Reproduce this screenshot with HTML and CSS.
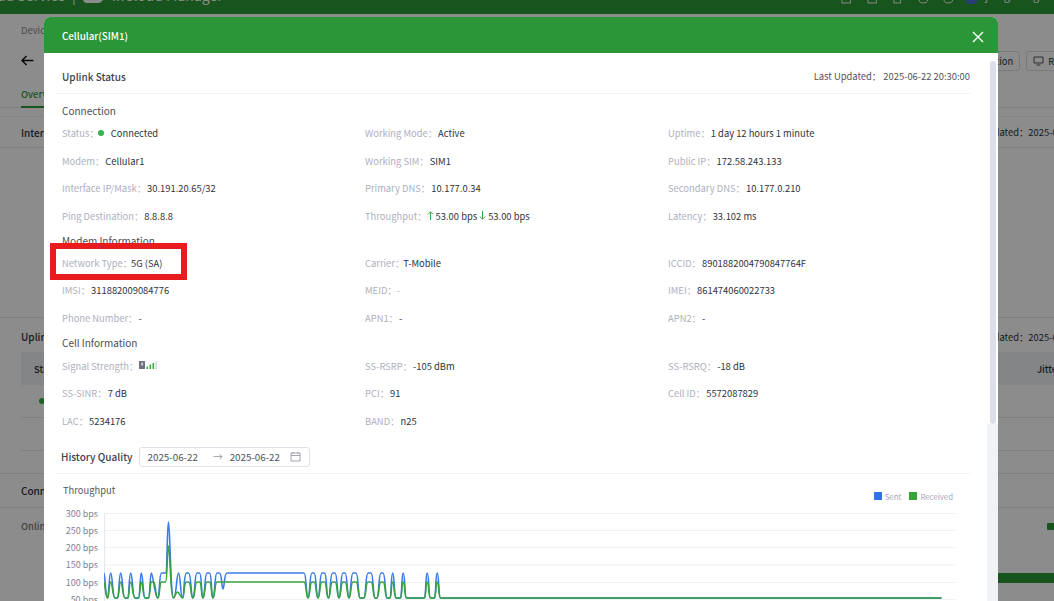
FILE: index.html
```html
<!DOCTYPE html>
<html lang="en">
<head>
<meta charset="utf-8">
<title>Cellular(SIM1)</title>
<link rel="stylesheet" href="styles.css">
</head>
<body>
<div class="page">
  <header class="topbar">
    <div class="brand">
      <span>ud Service</span><span class="sep">|</span>
      <svg class="logo" width="24" height="8" viewBox="0 0 24 8"><path d="M2 0h20c1 0 2 1 1 3l-4 3c-1 1-2 2-4 2H4C1 8 0 6 0 3z" fill="#fff"/></svg>
      <span>InCloud Manager</span>
    </div>
    <div class="tools">
      <svg width="11" height="4" viewBox="0 0 11 4"><path d="M1 0v3h9V0" fill="none" stroke="#fff"/></svg>
      <svg width="11" height="4" viewBox="0 0 11 4"><path d="M1 0v3h9V0" fill="none" stroke="#fff"/></svg>
      <svg width="11" height="4" viewBox="0 0 11 4"><path d="M2 0v3h7V0" fill="none" stroke="#fff"/></svg>
      <svg width="11" height="4" viewBox="0 0 11 4"><path d="M1 0c0 2 2 3 4.500 3s4.500-1 4.500-3" fill="none" stroke="#fff"/></svg>
      <svg width="11" height="4" viewBox="0 0 11 4"><path d="M1 0c0 2 2 3 4.500 3s4.500-1 4.500-3" fill="none" stroke="#fff"/></svg>
      <i class="avatar"></i>
      <span class="user">jiangmengzhi</span>
    </div>
  </header>
  <div class="crumb">Device</div>
  <div class="titlebar">
    <svg class="back" width="13" height="11" viewBox="0 0 13 11"><path d="M12.500 5.500H1.500M5.500 1L1 5.500 5.500 10" fill="none" stroke="#111" stroke-width="1.500"/></svg>
    <div class="actions">
      <span class="btn">Connection</span>
      <span class="btn"><svg width="11" height="10" viewBox="0 0 11 10"><path d="M1 1h9v6H1zM3.500 9h4" fill="none" stroke="#555" stroke-width="1"/></svg><span>Remote</span></span>
    </div>
  </div>
  <div class="tabs"><span class="tab">Overview</span></div>
  <section class="bg-card bg-inter"><b>Interface</b><span>Last Updated：2025-06-22 20:30:00</span></section>
  <section class="bg-card bg-uplink"><b>Uplink</b><span>Last Updated：2025-06-22 20:30:00</span></section>
  <div class="bg-head"><b>Status</b><b>Jitter</b></div>
  <div class="bg-row"><i class="bg-dot"></i></div>
  <div class="bg-row"></div>
  <section class="bg-card bg-conn"><b>Conn</b></section>
  <div class="bg-online"><span>Online</span><i class="online-bar"></i></div>
  <div class="bg-progress"></div>
</div>
<div class="dim-layer"></div>

<div class="modal">
  <div class="modal-head">
    <span>Cellular(SIM1)</span>
    <svg class="close" width="12" height="12" viewBox="0 0 12 12"><path d="M1 1l10 10M11 1L1 11" stroke="#fff" stroke-width="1.400" fill="none"/></svg>
  </div>
  <div class="modal-main">
    <div class="modal-body">
      <div class="uplink-head"><b>Uplink Status</b><span>Last Updated：&nbsp;2025-06-22 20:30:00</span></div>

      <h4 class="sec sec-conn">Connection</h4>
      <div class="grid">
        <div class="kv"><span class="k">Status：</span><i class="dot"></i><span class="v">Connected</span></div>
        <div class="kv"><span class="k">Working Mode：</span><span class="v">Active</span></div>
        <div class="kv"><span class="k">Uptime：</span><span class="v">1 day 12 hours 1 minute</span></div>
        <div class="kv"><span class="k">Modem：</span><span class="v">Cellular1</span></div>
        <div class="kv"><span class="k">Working SIM：</span><span class="v">SIM1</span></div>
        <div class="kv"><span class="k">Public IP：</span><span class="v">172.58.243.133</span></div>
        <div class="kv"><span class="k">Interface IP/Mask：</span><span class="v">30.191.20.65/32</span></div>
        <div class="kv"><span class="k">Primary DNS：</span><span class="v">10.177.0.34</span></div>
        <div class="kv"><span class="k">Secondary DNS：</span><span class="v">10.177.0.210</span></div>
        <div class="kv"><span class="k">Ping Destination：</span><span class="v">8.8.8.8</span></div>
        <div class="kv"><span class="k">Throughput：</span>
          <svg class="arr" width="7" height="9" viewBox="0 0 7 9"><path d="M3.500 9V1M.8 3.500L3.500 .8 6.200 3.500" fill="none" stroke="#2faa3d" stroke-width="1"/></svg><span class="v">53.00 bps</span>
          <svg class="arr arr-2" width="7" height="9" viewBox="0 0 7 9"><path d="M3.500 0v8M.8 5.500L3.500 8.200 6.200 5.500" fill="none" stroke="#2faa3d" stroke-width="1"/></svg><span class="v">53.00 bps</span></div>
        <div class="kv"><span class="k">Latency：</span><span class="v">33.102 ms</span></div>
      </div>

      <h4 class="sec sec-modem">Modem Information</h4>
      <div class="grid">
        <div class="kv"><span class="k">Network Type：</span><span class="v v-tight">5G (SA)</span></div>
        <div class="kv"><span class="k">Carrier：</span><span class="v v-tight">T-Mobile</span></div>
        <div class="kv"><span class="k">ICCID：</span><span class="v">8901882004790847764F</span></div>
        <div class="kv"><span class="k">IMSI：</span><span class="v">311882009084776</span></div>
        <div class="kv"><span class="k">MEID：</span><span class="k">-</span></div>
        <div class="kv"><span class="k">IMEI：</span><span class="v">861474060022733</span></div>
        <div class="kv"><span class="k">Phone Number：</span><span class="v">-</span></div>
        <div class="kv"><span class="k">APN1：</span><span class="v">-</span></div>
        <div class="kv"><span class="k">APN2：</span><span class="v">-</span></div>
      </div>

      <h4 class="sec sec-cell">Cell Information</h4>
      <div class="grid">
        <div class="kv"><span class="k">Signal Strength：</span>
          <svg class="signal" width="19" height="10" viewBox="0 0 19 10"><rect x="0" y="1" width="6" height="8" fill="#6d7180"/><rect x="2.500" y="2.500" width="1.200" height="3" fill="#fff"/><rect x="7.500" y="6.500" width="1.600" height="2.500" fill="#3aaa3c"/><rect x="10.500" y="4.500" width="1.600" height="4.500" fill="#3aaa3c"/><rect x="13.500" y="3" width="1.600" height="6" fill="#3aaa3c"/><rect x="16.500" y="1" width="1.200" height="8" fill="#c9ccd6"/></svg>
        </div>
        <div class="kv"><span class="k">SS-RSRP：</span><span class="v">-105 dBm</span></div>
        <div class="kv"><span class="k">SS-RSRQ：</span><span class="v">-18 dB</span></div>
        <div class="kv"><span class="k">SS-SINR：</span><span class="v">7 dB</span></div>
        <div class="kv"><span class="k">PCI：</span><span class="v">91</span></div>
        <div class="kv"><span class="k">Cell ID：</span><span class="v">5572087829</span></div>
        <div class="kv"><span class="k">LAC：</span><span class="v">5234176</span></div>
        <div class="kv"><span class="k">BAND：</span><span class="v">n25</span></div>
      </div>

      <div class="history">
        <b>History Quality</b>
        <div class="range">
          <span>2025-06-22</span><span class="arrow">→</span><span>2025-06-22</span>
          <svg class="cal" width="11" height="11" viewBox="0 0 11 11"><path d="M1 2h9v8H1zM1 4.500h9M3.200 .8v2M7.800 .8v2" fill="none" stroke="#8b8e99" stroke-width=".8"/></svg>
        </div>
      </div>

      <div class="chart-head">
        <span class="chart-title">Throughput</span>
        <div class="legend"><i class="sw sw-sent"></i><span>Sent</span><i class="sw sw-recv"></i><span>Received</span></div>
      </div>
      <div class="chart">
        <div class="ylabels"><span>300 bps</span><span>250 bps</span><span>200 bps</span><span>150 bps</span><span>100 bps</span><span>50 bps</span></div>
        <svg class="plot" width="851" height="90" viewBox="104 513 851 90">
          <g stroke="#f0f1f6" stroke-width="1.200">
            <path d="M104 513.500H955M104 530.500H955M104 547.500H955M104 565H955M104 582.500H955M104 599.500H955"/>
            <path d="M104.500 513V601" stroke="#e6e8f2"/>
          </g>
          <path class="ln-blue" d="M104 573C105 573 105.500 598 107.500 598C109 598 109 573 110.700 573C112.500 573 112.500 598 115 598H117.500C119 598 119 573 120.700 573C122.500 573 122.500 598 125 598H128C129 598 129 573 130.700 573C132.500 573 132.500 598 135 598H138.500C140 598 140 573 141.300 573C143 573 143 598 145 598H148.500C150 598 150 573 151.300 573C153 573 155 598 157.500 598C160 598 159 573 161.500 573H165.500C167.500 573 167 522 168.500 522C170 522 170.500 598 173.500 598C176.500 598 176.500 573 178.500 573C180.500 573 180.500 598 182.500 598C184.500 598 183.500 573 186.500 573H188.500C191.500 573 190.500 598 193 598C195 598 194.500 573 197 573H199.500C202 573 201 598 203 598C205 598 204.500 573 207 573H209.500C212 573 211 598 213 598C215 598 214.500 573 217 573H219.500C222 573 221.500 589 223 589C224.500 589 224 573 227 573H304C306.500 573 306 598 308 598C310 598 309.500 573 312 573H314C316.500 573 316 598 318 598C320 598 319.500 573 322 573H324.500C327 573 326 598 328.500 598C330.500 598 330 573 332.500 573H335C337.500 573 337 598 339 598C341 598 340.500 573 343 573H345C347.500 573 347 598 349 598C351 598 350.500 573 353 573H356C358.500 573 358 598 360 598H364C366 598 365.500 573 368 573H371C373.500 573 373 598 375 598H377C379 598 378.500 573 381 573H383C385.500 573 385 598 387 598H390C391.500 598 391 573 392.700 573C394.500 573 394 598 396 598H400.500C402 598 401.500 573 403.200 573C405 573 404.500 598 406.500 598H424.500C426 598 425.500 573 427.200 573C429 573 428.500 598 430.500 598H434.500C436 598 435.500 573 437.200 573C439 573 438.500 598 440.500 598H941.500"/>
          <path class="ln-green" d="M104 582C105 582 105.500 598 107.500 598C109 598 109 582 110.700 582C112.500 582 112.500 598 115 598H117.500C119 598 119 582 120.700 582C122.500 582 122.500 598 125 598H128C129 598 129 582 130.700 582C132.500 582 132.500 598 135 598H138.500C140 598 140 582 141.300 582C143 582 143 598 145 598H148.500C150 598 150 582 151.300 582H153.500C156 582 155 598 158 598C160 598 159 582 161.500 582H165.500C167.500 582 167 546 168.500 546C170 546 170.500 598 173.500 598C175 598 175.500 592 177.500 592C179.500 592 180.500 598 182.500 598C184.500 598 183.500 582 186.500 582H188.500C191.500 582 190.500 598 193 598C195 598 194.500 582 197 582H199.500C202 582 201 598 203 598C205 598 204.500 582 207 582H209.500C212 582 211 598 213 598C215 598 214.500 582 217 582H304C306.500 582 306 598 308 598C310 598 309.500 582 312 582H314C316.500 582 316 598 318 598C320 598 319.500 582 322 582H324.500C327 582 326 598 328.500 598C330.500 598 330 582 332.500 582H335C337.500 582 337 598 339 598C341 598 340.500 582 343 582H345C347.500 582 347 598 349 598C351 598 350.500 582 353 582H356C358.500 582 358 598 360 598H364C366 598 365.500 582 368 582H371C373.500 582 373 598 375 598H377C379 598 378.500 582 381 582H383C385.500 582 385 598 387 598H390C391.500 598 391 582 392.700 582C394.500 582 394 598 396 598H400.500C402 598 401.500 582 403.200 582C405 582 404.500 598 406.500 598H424.500C426 598 425.500 582 427.200 582C429 582 428.500 598 430.500 598H434.500C436 598 435.500 582 437.200 582C439 582 438.500 598 440.500 598H941.500"/>
        </svg>
      </div>
    </div>
    <div class="scroll"><div class="thumb"></div></div>
  </div>
</div>

<div class="callout"></div>
</body>
</html>
```
FILE: styles.css
```css
* { box-sizing: border-box; }
html, body { margin: 0; height: 601px; overflow: hidden; }
body { font-family: "Noto Sans CJK SC", "Noto Sans", sans-serif; font-size: 9.4px; color: #30323c; background: #fff; }

.page { height: 601px; overflow: hidden; position: relative; }
.topbar { height: 14px; background: #2a9a37; color: #fff; display: flex; justify-content: space-between; overflow: hidden; white-space: nowrap; }
.brand { display: flex; align-items: center; height: 8px; margin: -9px 0 0 -3px; font-size: 14px; line-height: 8px; }
.sep { margin: 0 7px; }
.logo { margin: 7px 5px 0 0; }
.tools { display: flex; align-items: flex-start; gap: 15px; flex: none; width: 213px; }
.avatar { width: 11px; height: 4px; background: #4a6fd8; border-radius: 0 0 6px 6px; margin-left: -3px; margin-right: -7px; flex: none; }
.user { font-size: 11px; line-height: 3px; height: 4px; margin-top: -6px; }
.crumb { padding: 8px 21px 0; line-height: 16px; color: #8a8a8a; }
.titlebar { display: flex; justify-content: space-between; align-items: center; padding: 12px 0 0 21px; height: 33px; }
.actions { display: flex; gap: 6px; margin-right: -35px; }
.btn { display: flex; align-items: center; gap: 4px; border: 1px solid #dcdde3; border-radius: 3px; height: 20px; padding: 0 6px; white-space: nowrap; }
.tabs { display: flex; align-items: flex-end; padding: 0 21px; height: 37px; border-bottom: 1px solid #e6e6e6; color: #2a9a37; font-weight: 500; }
.tab { display: block; padding-bottom: 5px; margin-bottom: -1px; line-height: 14px; border-bottom: 2px solid #2a9a37; }
.bg-card { display: flex; justify-content: space-between; padding: 0 0 0 21px; align-items: center; border-bottom: 1px solid #e6e6e6; white-space: nowrap; }
.bg-card b { font-size: 10px; font-weight: 500; }
.bg-card span { margin-right: -61px; }
.bg-inter { height: 32px; margin-top: 8px; border-top: 1px solid #f0f0f2; }
.bg-uplink { margin-top: 169px; height: 35px; padding-top: 3px; border-top: 1px solid #e6e6e6; border-bottom: 0; }
.bg-head { margin-left: 21px; height: 33px; background: #f1f2f5; display: flex; justify-content: space-between; align-items: center; padding-left: 13px; font-weight: 500; }
.bg-head b { font-weight: 500; }
.bg-head b:last-child { margin-right: -7px; }
.bg-row { height: 33px; margin-left: 21px; border-bottom: 1px solid #e9e9ec; display: flex; align-items: center; }
.bg-dot { width: 6px; height: 6px; border-radius: 50%; background: #35b34a; margin-left: 18px; }
.bg-conn { margin-top: 22px; height: 35px; border-top: 1px solid #e6e6e6; }
.bg-online { display: flex; justify-content: space-between; align-items: center; padding: 11px 0 0 21px; line-height: 14px; font-weight: 500; color: #777; }
.online-bar { width: 10px; height: 7px; background: #2a9a37; border-radius: 1px; margin-right: -3px; }
.bg-progress { margin: 40px 0 0 500px; height: 10px; background: #2a9a37; }

.dim-layer { position: fixed; top: 0; left: 0; width: 1054px; height: 601px; background: rgba(0, 0, 0, .45); }

.modal { position: fixed; left: 44px; top: 17px; width: 954px; height: 584px; background: #fff; border-radius: 6px 6px 0 0; display: flex; flex-direction: column; overflow: hidden; }
.modal-head { height: 36px; flex: none; background: #2a9638; color: #fff; font-size: 9.8px; font-weight: 500; display: flex; align-items: center; justify-content: space-between; padding: 1px 14px 0 18px; }
.close { margin-top: 2px; }
.modal-main { flex: 1; display: flex; min-height: 0; }
.modal-body { flex: 1; min-width: 0; padding: 0 17px 0 12px; overflow: hidden; }
.scroll { width: 11px; flex: none; background: linear-gradient(#fff 0, #fff 371px, #f1f2f6 371px); padding: 8px 2px 0 3px; }
.thumb { height: 363px; background: #dcdeea; border-radius: 3px; }

.uplink-head { display: flex; justify-content: space-between; align-items: center; height: 41px; padding: 6px 0 0 6px; border-bottom: 1px solid #f3f3f5; color: #50525c; }
.uplink-head b { font-weight: 500; font-size: 10px; color: #40424d; }
.sec { margin: 0; padding-left: 6px; font-size: 10px; font-weight: 400; color: #4a4c57; line-height: 16px; }
.sec-conn { margin-top: 9px; }
.sec-modem { margin-top: 3px; height: 16px; }
.sec-cell { margin-top: 3px; height: 17px; }
.grid { display: grid; grid-template-columns: 303px 303px 1fr; padding-left: 6px; grid-auto-rows: 27.7px; }
.kv { display: flex; align-items: center; white-space: nowrap; line-height: 14px; height: 27.7px; }
.k { color: #aeb0bd; }
.v { color: #30323c; margin-left: 1px; }
.v-tight { margin-left: -1px; }
.dot { width: 6px; height: 6px; border-radius: 50%; background: #35b34a; margin: 0 6px 0 -1px; }
.arr { margin: 0 1px 0 0; }
.arr-2 { margin-left: 2px; }
.signal { margin: -2px 0 0 1px; }

.history { display: flex; align-items: center; gap: 6px; height: 33px; margin-top: 6px; padding-left: 5px; border-bottom: 1px solid #f3f3f5; }
.history b { font-weight: 500; font-size: 10px; color: #40424d; }
.range { display: flex; align-items: center; width: 171px; height: 20px; border: 1px solid #dfe1e8; border-radius: 3px; padding: 0 8px; color: #50525c; font-size: 9.8px; }
.arrow { margin: 0 7px 0 15px; color: #9a9ca6; }
.cal { margin-left: auto; }

.chart-head { display: flex; justify-content: space-between; align-items: center; height: 31px; padding: 2px 17px 0 7px; }
.chart-title { color: #55575f; }
.legend { display: flex; align-items: center; color: #a5a7b4; font-size: 7.8px; padding-top: 12px; }
.sw { width: 8px; height: 8px; margin-right: 3px; }
.sw-sent { background: #2f72e6; }
.sw-recv { background: #35a636; margin-left: 8px; }
.chart { display: flex; align-items: flex-start; margin-top: 8px; }
.ylabels { width: 42px; margin-right: 6px; flex: none; text-align: right; color: #808390; font-size: 9px; display: flex; flex-direction: column; margin-top: -8px; line-height: 17.2px; }
.plot { display: block; flex: none; }
.ln-blue { fill: none; stroke: #3a7be8; stroke-width: 1.6; }
.ln-green { fill: none; stroke: #35a23f; stroke-width: 1.6; }

.callout { position: fixed; left: 50px; top: 243px; width: 137px; height: 37px; border: 6px solid #e81c1c; }
```
